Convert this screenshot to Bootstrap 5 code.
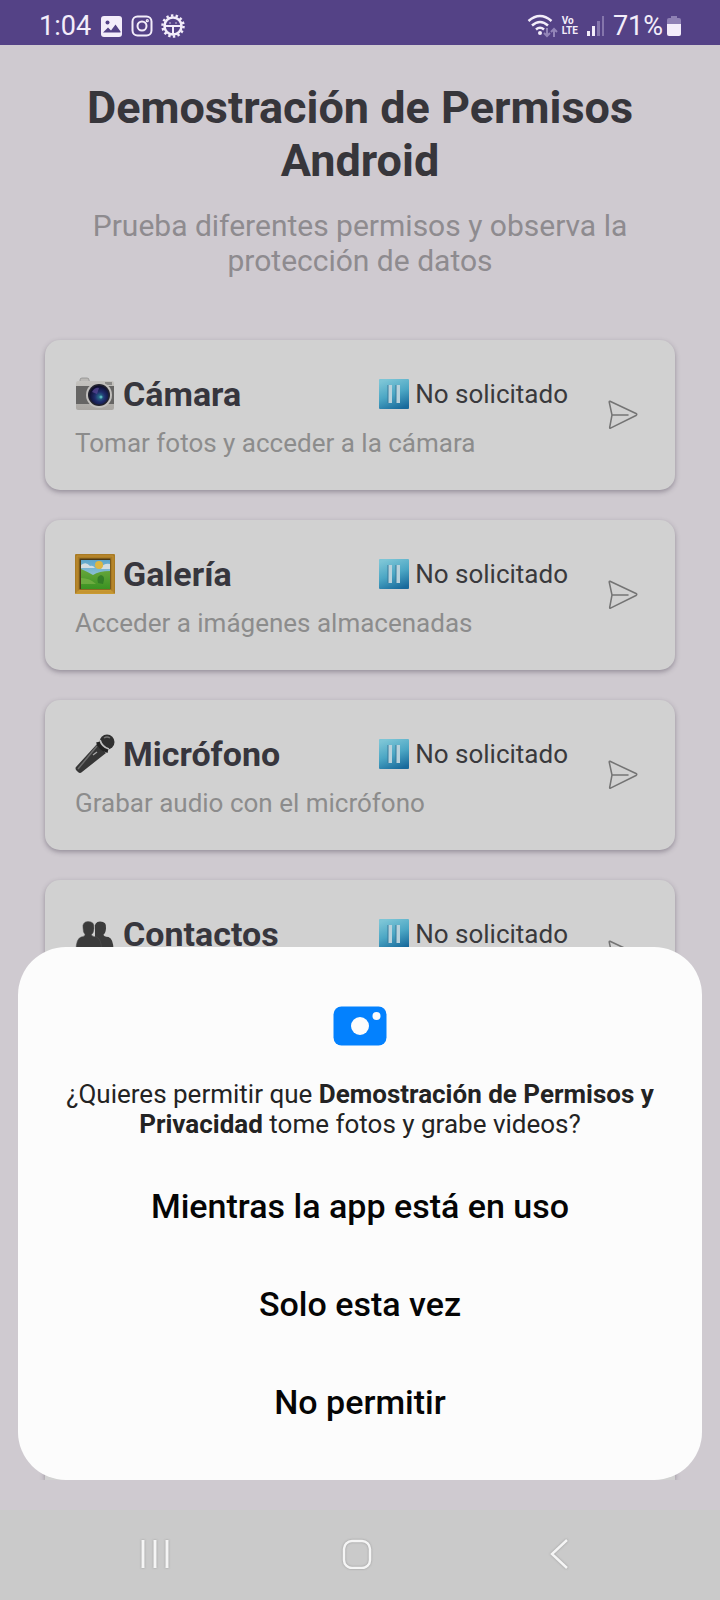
<!DOCTYPE html>
<html lang="es">
<head>
<meta charset="utf-8">
<meta name="viewport" content="width=device-width, initial-scale=1">
<title>Demostración de Permisos Android</title>
<link href="https://cdn.jsdelivr.net/npm/bootstrap@5.3.0/dist/css/bootstrap.min.css" rel="stylesheet">
<style>
body { font-family: Roboto, "Liberation Sans", sans-serif; background: #cfcad0; color: #39383d; }
svg { display: block; flex: none; }
.status-bar { height: 45px; padding: 7px 39px 0 39px; background: #544286; color: #f3edfa; font-size: 27px; line-height: 40px; }
.volte { font-size: 10px; line-height: 10px; font-weight: 700; }
.screen { min-height: 0; padding: 36px 45px 0; margin-bottom: 30px; }
.page-title { font-size: 45px; line-height: 53px; font-weight: 700; color: #37363b; margin-bottom: 21px; }
.page-sub { font-size: 30px; line-height: 35px; color: #8e8b8f; margin-bottom: 62px; }
.perm-list { gap: 30px; }
.perm { min-height: 150px; padding: 30px; gap: 32px; border-radius: 15px; background: #d1d1d1; box-shadow: 0 2px 5px rgba(60, 50, 70, .4); }
.perm-name { font-size: 34px; line-height: 48px; font-weight: 700; color: #37363d; gap: 8px; }
.perm-state { font-size: 26px; line-height: 48px; color: #39393c; gap: 6px; }
.perm-desc { font-size: 26px; line-height: 30px; color: #8c8c8c; margin-top: 10px; }
.perm-send { width: 45px; height: 90px; }
.sheet { left: 18px; right: 18px; padding: 59px 40px 29px; border-radius: 48px; background: #fcfcfc; }
.sheet-text { font-size: 26px; line-height: 30px; color: #232323; margin: 33px 0 18px; }
.sheet-btn { font-size: 34px; line-height: 40px; font-weight: 500; padding: 29px 0; color: #050505; background: none; }
.nav-keys { height: 90px; padding: 0 60px 2px 54px; background: #cacaca; }
.nav-keys svg { filter: drop-shadow(0 0 1px #999); }
</style>
</head>
<body class="vh-100 d-flex flex-column overflow-hidden">
<svg width="0" height="0" class="position-absolute" aria-hidden="true">
  <defs>
    <linearGradient id="blue" x1=".3" y1="0" x2=".7" y2="1"><stop offset="0" stop-color="#7cc5d6"/><stop offset=".5" stop-color="#4ba6c4"/><stop offset="1" stop-color="#186a9c"/></linearGradient>
    <linearGradient id="silver" x1="0" y1="0" x2="0" y2="1"><stop offset="0" stop-color="#c5c3bf"/><stop offset="1" stop-color="#aaa7a3"/></linearGradient>
    <radialGradient id="lens" cx=".55" cy=".6" r=".6"><stop offset="0" stop-color="#2a7f92"/><stop offset=".45" stop-color="#1f2c6b"/><stop offset="1" stop-color="#0c0b27"/></radialGradient>
    <linearGradient id="sky" x1="0" y1="0" x2="0" y2="1"><stop offset="0" stop-color="#5ca6cb"/><stop offset="1" stop-color="#b9d8dc"/></linearGradient>
    <linearGradient id="grass" x1="0" y1="0" x2="0" y2="1"><stop offset="0" stop-color="#69a63c"/><stop offset="1" stop-color="#3a9322"/></linearGradient>
  </defs>
  <symbol id="pause" viewBox="0 0 30 30"><rect width="30" height="30" rx="1" fill="url(#blue)"/><path d="M9 6h4v18H9zM17 6h4v18h-4z" fill="#b9d2dc"/><path d="M9 24V6M17 24V6" stroke="#367b9b" stroke-width="1"/></symbol>
  <symbol id="send" viewBox="0 0 30 30"><path d="M2 1.300L28 13.500q1.600 1 0 2L2.500 28.200q-1 .3-.8-.8L4 15 1.200 2q0-1 .8-.7zM4 15h16" fill="none" stroke="#747474" stroke-width="1.500" stroke-linejoin="round" stroke-linecap="round"/></symbol>
</svg>

<header class="status-bar d-flex justify-content-between flex-shrink-0">
  <div class="d-flex align-items-center">
    <span>1:04</span>
    <svg class="ms-2 me-2" width="24" height="24" viewBox="2 0 24 24"><rect x="4" y="2" width="21" height="21" rx="3" fill="#f3edfa"/><circle cx="10.500" cy="8.500" r="2" fill="#544286"/><path d="M6 18.500l5-5 3 3 4.500-6 5 7v1z" fill="#544286"/></svg>
    <svg class="me-2" width="22" height="22" viewBox="0 0 22 22" fill="none" stroke="#f3edfa" stroke-width="2"><rect x="1.500" y="1.500" width="19" height="19" rx="5"/><circle cx="11" cy="11" r="4.500"/><circle cx="16.300" cy="5.700" r=".6"/></svg>
    <svg width="24" height="24" viewBox="0 0 24 24" fill="none" stroke="#f3edfa"><circle cx="12" cy="12" r="8.500" stroke-width="2.500"/><circle cx="12" cy="12" r="10.500" stroke-width="2.500" stroke-dasharray="2.400 2.310"/><path d="M4 12h16M12 12v8" stroke-width="2"/><path d="M9 8.500v1M15 8.500v1" stroke-width="1.500"/></svg>
  </div>
  <div class="d-flex align-items-center">
    <svg width="31" height="24" viewBox="0 0 31 24" fill="none" stroke="#f3edfa" stroke-width="2.500"><path d="M1.500 7q11.500-10 23 0M5 11.500q8-7 16 0M9 15.500q4-3.500 8 0"/><circle cx="13" cy="19" r="2" fill="#f3edfa" stroke="none"/><path d="M20 14v8m-3-3l3 3 3-3M27 23v-8m-3 3l3-3 3 3" stroke="#9385b8" stroke-width="2"/></svg>
    <span class="volte ms-1">Vo<br>LTE</span>
    <svg class="ms-2 me-2" width="19" height="22" viewBox="0 0 19 22"><path d="M1 16h3v5H1zM6 11h3v10H6z" fill="#f3edfa"/><path d="M11 6h3v15h-3zM16 1h2v20h-2z" fill="#8576ac"/></svg>
    <span>71%</span>
    <svg class="ms-1" width="14" height="22" viewBox="0 0 14 22"><path d="M4 1h6v2h2q2 0 2 2v4H0V5q0-2 2-2h2z" fill="#8e80b4"/><path d="M0 9h14v10q0 2-2 2H2q-2 0-2-2z" fill="#f3edfa"/></svg>
  </div>
</header>

<main class="screen position-relative flex-grow-1 d-flex flex-column overflow-hidden">
  <h1 class="page-title text-center">Demostración de Permisos Android</h1>
  <p class="page-sub text-center px-3">Prueba diferentes permisos y observa la protección de datos</p>

  <div class="perm-list d-flex flex-column flex-grow-1">
    <section class="perm d-flex align-items-start">
      <div class="flex-grow-1">
        <div class="d-flex justify-content-between">
          <h2 class="perm-name d-flex align-items-center mb-0">
            <svg width="40" height="40" viewBox="0 0 40 40"><path d="M5 6q0-2 2-2h5q2 0 2 2l1 3H5z" fill="#bbb9b6" stroke="#888" stroke-width=".7"/><rect x="1" y="7" width="38" height="29" rx="2" fill="url(#silver)"/><path d="M1 12h38v18H1z" fill="#666564"/><path d="M30 8h7v3h-7z" fill="#8b8a88"/><circle cx="24" cy="21" r="13" fill="#c2c0bd"/><circle cx="24" cy="21" r="11" fill="#22222e"/><circle cx="24" cy="21" r="9.500" fill="url(#lens)"/><path d="M17 18q3-5 7-4l-2 6z" fill="#5b4a99" opacity=".7"/><circle cx="26" cy="23" r="1.500" fill="#59b5bd"/></svg>
            <span>Cámara</span></h2>
          <div class="perm-state d-flex align-items-center"><svg width="30" height="30"><use href="#pause"/></svg><span>No solicitado</span></div>
        </div>
        <p class="perm-desc mb-0">Tomar fotos y acceder a la cámara</p>
      </div>
      <button class="perm-send btn p-0 border-0 d-flex align-items-center justify-content-center" type="button" aria-label="Solicitar cámara"><svg width="30" height="30"><use href="#send"/></svg></button>
    </section>

    <section class="perm d-flex align-items-start">
      <div class="flex-grow-1">
        <div class="d-flex justify-content-between">
          <h2 class="perm-name d-flex align-items-center mb-0">
            <svg width="40" height="40" viewBox="0 0 40 40"><rect width="40" height="40" rx="1" fill="#a97b24"/><path d="M0 40l5-5h30l5 5z" fill="#c99a31"/><path d="M2 2h36v36H2z" fill="none" stroke="#c08f32"/><rect x="4.500" y="4.500" width="31" height="31" fill="#4b3917"/><rect x="6" y="6" width="29" height="29" fill="url(#sky)"/><path d="M6 11q5-4 9 1 3-1 5 2H6zM27 13q2-4 8-3v5h-9z" fill="#d3dde0"/><circle cx="24" cy="11" r="4" fill="#dcb743"/><path d="M6 15q7 3 12 6 6-4 17-4v18H6z" fill="url(#grass)"/><path d="M6 24q9 0 15 6H6z" fill="#7cb448" opacity=".7"/><path d="M23 29q-2-7 3-8 5 1 2 9z" fill="#2d7526" opacity=".8"/></svg>
            <span>Galería</span></h2>
          <div class="perm-state d-flex align-items-center"><svg width="30" height="30"><use href="#pause"/></svg><span>No solicitado</span></div>
        </div>
        <p class="perm-desc mb-0">Acceder a imágenes almacenadas</p>
      </div>
      <button class="perm-send btn p-0 border-0 d-flex align-items-center justify-content-center" type="button" aria-label="Solicitar galería"><svg width="30" height="30"><use href="#send"/></svg></button>
    </section>

    <section class="perm d-flex align-items-start">
      <div class="flex-grow-1">
        <div class="d-flex justify-content-between">
          <h2 class="perm-name d-flex align-items-center mb-0">
            <svg width="40" height="40" viewBox="0 0 40 40"><path d="M22 10l9 9L7 38q-2 2-4 0l-2-2q-1-2 0-3z" fill="#363636"/><path d="M22 12L3 35" stroke="#6b6b6b" stroke-width="1.500"/><circle cx="32" cy="8" r="7.500" fill="#303030"/><path d="M23 8q2 7 10 9" fill="none" stroke="#222" stroke-width="4"/><path d="M25 6q2 7 9 9" fill="none" stroke="#c0c0c0" stroke-width="1.800"/><path d="M29 4q3-2 6 0" fill="none" stroke="#777" stroke-width="1.500"/><path d="M18 21l4-3" stroke="#aaa" stroke-width="1.200"/></svg>
            <span>Micrófono</span></h2>
          <div class="perm-state d-flex align-items-center"><svg width="30" height="30"><use href="#pause"/></svg><span>No solicitado</span></div>
        </div>
        <p class="perm-desc mb-0">Grabar audio con el micrófono</p>
      </div>
      <button class="perm-send btn p-0 border-0 d-flex align-items-center justify-content-center" type="button" aria-label="Solicitar micrófono"><svg width="30" height="30"><use href="#send"/></svg></button>
    </section>

    <section class="perm d-flex align-items-start flex-grow-1 rounded-bottom-0">
      <div class="flex-grow-1">
        <div class="d-flex justify-content-between">
          <h2 class="perm-name d-flex align-items-center mb-0">
            <svg width="40" height="40" viewBox="0 0 40 40" fill="#3b3b3b"><path d="M20 14q-1-6 5-6.500 7 0 6 7-.5 5-2.500 6 0 2 5 2.500 5 2 5 13H20z"/><path d="M8 14q-1-6 5-6.500 7 0 6 7-.5 5-2.500 6 0 2 5 2.500 5 2 5 13H1q0-11 5-13 4-.5 4-2.500-2-2-2-6.500z" stroke="#555" stroke-width=".5"/></svg>
            <span>Contactos</span></h2>
          <div class="perm-state d-flex align-items-center"><svg width="30" height="30"><use href="#pause"/></svg><span>No solicitado</span></div>
        </div>
      </div>
      <button class="perm-send btn p-0 border-0 d-flex align-items-center justify-content-center" type="button" aria-label="Solicitar contactos"><svg width="30" height="30"><use href="#send"/></svg></button>
    </section>
  </div>

  <div class="sheet position-absolute bottom-0 text-center" role="dialog" aria-labelledby="ask">
    <svg class="mx-auto" width="54" height="40" viewBox="0 0 54 40"><rect x=".5" y=".5" width="53" height="39" rx="8" fill="#0381fe"/><circle cx="27" cy="20" r="9" fill="#fcfcfc"/><circle cx="43.500" cy="10" r="4" fill="#fcfcfc"/></svg>
    <p class="sheet-text" id="ask">¿Quieres permitir que <b>Demostración de Permisos y Privacidad</b> tome fotos y grabe videos?</p>
    <button class="sheet-btn d-block w-100 border-0" type="button">Mientras la app está en uso</button>
    <button class="sheet-btn d-block w-100 border-0" type="button">Solo esta vez</button>
    <button class="sheet-btn d-block w-100 border-0" type="button">No permitir</button>
  </div>
</main>

<nav class="nav-keys d-flex flex-shrink-0" aria-label="Sistema">
  <button class="btn border-0 flex-fill w-100 d-flex align-items-center justify-content-center" type="button" aria-label="Recientes"><svg width="30" height="30" viewBox="0 0 30 30"><path d="M3 1v28M15 1v28M27 1v28" stroke="#f5f5f5" stroke-width="3"/></svg></button>
  <button class="btn border-0 flex-fill w-100 d-flex align-items-center justify-content-center" type="button" aria-label="Inicio"><svg width="30" height="30" viewBox="0 0 30 30"><rect x="2" y="2" width="26" height="27" rx="8" fill="none" stroke="#f5f5f5" stroke-width="2.500"/></svg></button>
  <button class="btn border-0 flex-fill w-100 d-flex align-items-center justify-content-center" type="button" aria-label="Atrás"><svg width="18" height="30" viewBox="0 0 18 30"><path d="M17 1L2 15l15 14" fill="none" stroke="#f5f5f5" stroke-width="2.500"/></svg></button>
</nav>
<script src="https://cdn.jsdelivr.net/npm/bootstrap@5.3.0/dist/js/bootstrap.bundle.min.js"></script>
</body>
</html>
